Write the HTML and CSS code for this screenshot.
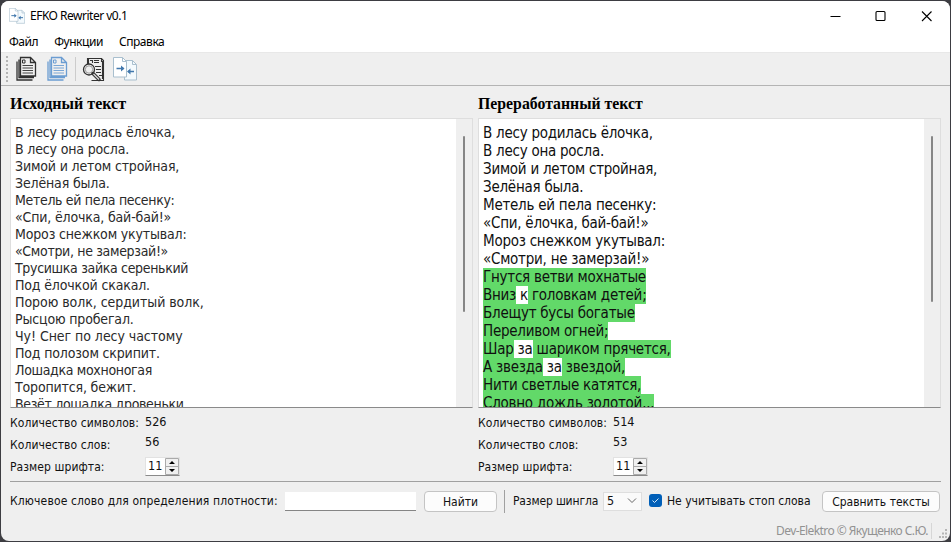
FILE: index.html
```html
<!DOCTYPE html>
<html lang="ru">
<head>
<meta charset="utf-8">
<title>EFKO Rewriter v0.1</title>
<link rel="stylesheet" href="styles.css">
</head>
<body>
<svg class="defs" width="0" height="0" aria-hidden="true">
  <symbol id="doc" viewBox="0 0 22 26">
    <path d="M5.500 1.500h10l5 5v13.500h-15z M15.500 1.500v5h5 M4 3.500v18h15 M2 5.500v18.500h15.500" fill="none" stroke="currentColor" stroke-width="1.300"/>
    <path d="M7.500 4h2.500v3h-2.500z" fill="none" stroke="currentColor"/>
    <path d="M7.500 9.500h10.500 M7.500 12h10.500 M7.500 14.500h10.500 M7.500 17h10.500" fill="none" stroke="currentColor" stroke-width=".900"/>
  </symbol>
  <symbol id="pair" viewBox="0 0 24 24">
    <path d="M11.500 3.500h8l4 4v15.500h-12z" fill="#f4fafd" stroke="#a9bfce"/>
    <path d="M19.500 3.500v4h4" fill="none" stroke="#a9bfce"/>
    <path d="M.500 .500h9l4 4v15.500h-13z" fill="#fff" stroke="#a9bfce"/>
    <path d="M9.500 .500v4h4" fill="none" stroke="#a9bfce"/>
    <path d="M3.500 11.500h7 M21 14.500h-6" stroke="#4278ad" stroke-width="1.500"/>
    <path d="M8 8.500l3.500 3l-3.500 3z M17.500 11.500l-3.500 3l3.500 3z" fill="#4278ad"/>
  </symbol>
</svg>
<div class="window">
  <header class="titlebar">
    <svg class="app-icon"><use href="#pair"/></svg>
    <span class="title">EFKO Rewriter v0.1</span>
    <svg class="controls" viewBox="0 0 104 12"><path d="M.500 6.500h10" /><rect x="46" y="1.500" width="9" height="9" rx="1"/><path d="M92 1.500l9.500 9.500M101.500 1.500l-9.500 9.500"/></svg>
  </header>
  <nav class="menubar"><span class="m1">Файл</span><span class="m2">Функции</span><span class="m3">Справка</span></nav>
  <div class="toolbar">
    <i class="grip"></i>
    <svg class="tool doc"><use href="#doc"/></svg>
    <svg class="tool doc blue"><use href="#doc"/></svg>
    <i class="sep"></i>
    <svg class="tool find" viewBox="0 0 24 25"><path d="M5.500 7V1.500h14l2 2v20h-12 M19.500 1.500v3h2 M6.500 7V2 M8 3.500h2.500v2.500 M12 3.500h5 M12 5.500h5 M13 9.500h6 M14 12.500h5 M14 15.500h5 M17 18.500h3 M20.500 5v17" fill="none" stroke="#333" stroke-width="1.100"/><circle cx="7" cy="12.500" r="5.500" fill="#efefef" stroke="#333" stroke-width="1.300"/><circle cx="7" cy="12.500" r="3.700" fill="none" stroke="#777" stroke-width=".7"/><path d="M11 16.500l6 6" stroke="#333" stroke-width="3.500" stroke-linecap="round"/><path d="M11.500 17l5.500 5.500" stroke="#ddd" stroke-width="1.200"/></svg>
    <svg class="tool pair"><use href="#pair"/></svg>
  </div>
  <main class="panes">
    <section class="pane">
      <h2 class="src">Исходный текст</h2>
      <div class="editor">
        <div class="text source">В лесу родилась ёлочка,
В лесу она росла.
Зимой и летом стройная,
Зелёная была.
<span class="tight">Метель ей пела песенку:</span>
«Спи, ёлочка, бай-бай!»
Мороз снежком укутывал:
<span class="tight">«Смотри, не замерзай!»</span>
<span class="tight">Трусишка зайка серенький</span>
Под ёлочкой скакал.
<span class="loose">Порою волк, сердитый волк,</span>
Рысцою пробегал.
<span class="loose">Чу! Снег по лесу частому</span>
Под полозом скрипит.
<span class="tight">Лошадка мохноногая</span>
Торопится, бежит.
<span class="tight">Везёт лошадка дровеньки,</span></div>
        <div class="scroll"><i class="thumb left"></i></div>
      </div>
      <dl class="stats">
        <dt>Количество символов:</dt><dd>526</dd>
        <dt>Количество слов:</dt><dd class="up">56</dd>
        <dt>Размер шрифта:</dt><dd><span class="spin"><b>11</b><svg viewBox="0 0 14 17"><path d="M.500 .500h13v16h-13z M.500 8.500h13" fill="#f0f0f0" stroke="#aaa"/><path d="M4 6l3-3l3 3z M4 11l3 3l3-3z" fill="#000"/></svg></span></dd>
      </dl>
    </section>
    <section class="pane">
      <h2 class="res">Переработанный текст</h2>
      <div class="editor">
        <div class="text result">В лесу родилась ёлочка,
В лесу она росла.
Зимой и летом стройная,
Зелёная была.
Метель ей пела песенку:
«Спи, ёлочка, бай-бай!»
Мороз снежком укутывал:
«Смотри, не замерзай!»
<mark>Гнутся ветви мохнатые</mark>
<mark>Вниз</mark> к<mark> головкам детей;</mark>
<mark>Блещут бусы богатые</mark>
<mark>Переливом огней;</mark>
<mark>Шар</mark> за<mark> шариком прячется,</mark>
<mark>А звезда</mark> за<mark> звездой,</mark>
<mark>Нити светлые катятся,</mark>
<mark>Словно дождь золотой...</mark></div>
        <div class="scroll"><i class="thumb right"></i></div>
      </div>
      <dl class="stats">
        <dt>Количество символов:</dt><dd>514</dd>
        <dt>Количество слов:</dt><dd class="up">53</dd>
        <dt>Размер шрифта:</dt><dd><span class="spin"><b>11</b><svg viewBox="0 0 14 17"><path d="M.500 .500h13v16h-13z M.500 8.500h13" fill="#f0f0f0" stroke="#aaa"/><path d="M4 6l3-3l3 3z M4 11l3 3l3-3z" fill="#000"/></svg></span></dd>
      </dl>
    </section>
  </main>
  <div class="actions">
    <span class="keyword">Ключевое слово для определения плотности:</span>
    <span class="field"></span>
    <span class="button find-btn">Найти</span>
    <i class="divider"></i>
    <span class="shingle">Размер шингла</span>
    <span class="combo">5<svg viewBox="0 0 10 6"><path d="M1 .500l4 4l4-4" fill="none" stroke="#666"/></svg></span>
    <svg class="check" viewBox="0 0 13 13"><rect width="13" height="13" rx="3" fill="#005fb8"/><path d="M3.500 6.500l2 2l4-4" fill="none" stroke="#d5e8f8"/></svg>
    <span class="stop">Не учитывать стоп слова</span>
    <span class="button compare">Сравнить тексты</span>
  </div>
  <footer class="status"><span>Dev-Elektro © Якущенко С.Ю.</span><svg viewBox="0 0 10 10"><path d="M7 1h2M4 4.500h2M7 4.500h2M1 8h2M4 8h2M7 8h2" stroke="#b5b5b5" stroke-width="2"/></svg></footer>
</div>
</body>
</html>
```
FILE: styles.css
```css
* { box-sizing: border-box; }
body { margin: 0; width: 951px; height: 542px; background: #3d3d42; overflow: hidden; padding: 1px; font: 12px/16px "DejaVu Sans Condensed", "Noto Sans", sans-serif; color: #111; }
.defs { position: absolute; }
svg { display: block; flex: none; }
i { display: block; flex: none; }
span { white-space: nowrap; }
.window { width: 949px; height: 540px; border-radius: 8px; overflow: hidden; background: #efefef; display: flex; flex-direction: column; }
.titlebar { height: 30px; background: #fff; display: flex; align-items: center; padding: 0 16px 0 8px; flex: none; font: 12px/16px "Noto Sans", sans-serif; color: #000; }
.app-icon { width: 16px; height: 16px; }
.title { margin-left: 5px; letter-spacing: -0.5px; }
.controls { width: 104px; height: 12px; margin-left: auto; fill: none; stroke: #000; stroke-width: 1.1; }
.menubar { height: 22px; flex: none; background: #fff; border-bottom: 1px solid #e8e8e8; display: flex; padding: 2px 8px; gap: 16px; font: 12px/18px "Noto Sans", sans-serif; letter-spacing: -0.45px; color: #000; }
.toolbar { height: 33px; flex: none; border-bottom: 1px solid #b4b4b4; display: flex; align-items: center; padding-left: 5px; }
.grip { width: 2px; height: 26px; background: repeating-linear-gradient(#b4b4b4 0 2px, transparent 2px 4px); }
.doc { width: 22px; height: 26px; margin-left: 7px; color: #303030; }
.doc.blue { margin-left: 9px; color: #6b9dd2; }
.sep { width: 1px; height: 24px; margin-left: 7px; background: #ccc; }
.find { width: 24px; height: 25px; margin-left: 6px; }
.pair { width: 24px; height: 24px; margin-left: 7px; }
.panes { display: grid; grid-template-columns: 463px 463px; column-gap: 5px; margin: 9px 9px 0; flex: none; }
h2 { margin: 0; height: 23px; font: bold 15px/18px "Liberation Serif", serif; font-size: 15.8px; color: #000; }
.src { font-size: 16px; }
.editor { height: 290px; border: 1px solid #dedede; border-bottom-color: #8a8a8a; background: #fff; display: flex; justify-content: space-between; overflow: hidden; }
.text { white-space: pre; padding: 5px 4px; }
.source { font-size: 14px; line-height: 17px; letter-spacing: -0.16px; color: #2a2a2a; }
.tight { letter-spacing: -0.33px; }
.loose { letter-spacing: -0.05px; }
.result { font-size: 15px; line-height: 18px; letter-spacing: -0.25px; color: #101010; }
mark { display: inline-block; height: 18px; background: #62d969; color: inherit; vertical-align: top; }
.scroll { width: 16px; background: #efefef; padding: 17px 0 0 7px; }
.thumb { width: 2px; background: #868686; border-radius: 1px; }
.thumb.left { height: 176px; }
.thumb.right { height: 166px; }
.stats { margin: 4px 0 0; display: grid; grid-template-columns: 135px 60px; grid-template-rows: 22px 22px 22px; align-items: center; }
dt, dd { margin: 0; white-space: nowrap; }
dt { letter-spacing: 0.08px; }
dd { font-size: 12.5px; padding-bottom: 2px; }
.up { padding-bottom: 6px; }
.spin { display: flex; align-items: center; width: 35px; height: 19px; background: #fff; border: 1px solid #e2e2e2; border-bottom-color: #8a8a8a; padding-left: 2px; }
.spin b { font-weight: normal; width: 17px; }
.spin svg { width: 14px; height: 17px; }
.actions { margin: 3px 9px 0; border-top: 1px solid #a0a0a0; height: 39px; flex: none; display: flex; align-items: center; }
.keyword { width: 275px; letter-spacing: 0.14px; }
.field { width: 131px; height: 19px; background: #fff; border-bottom: 1px solid #858585; }
.button { height: 21px; border: 1px solid #c4c4c4; border-radius: 4px; background: #fcfcfc; text-align: center; line-height: 20px; }
.find-btn { width: 73px; margin-left: 8px; }
.divider { width: 1px; height: 23px; background: #a0a0a0; margin-left: 7px; }
.shingle { width: 90px; margin-left: 8px; letter-spacing: -0.15px; }
.combo { width: 39px; height: 19px; border: 1px solid #dedede; background: #fafafa; display: flex; align-items: center; justify-content: space-between; padding: 0 4px 0 3px; font-size: 12.5px; }
.combo svg { width: 10px; height: 6px; }
.check { width: 13px; height: 13px; margin-left: 7px; margin-bottom: 2px; }
.stop { margin-left: 5px; width: 147px; }
.compare { width: 118px; margin-left: 8px; }
.status { height: 22px; margin-top: auto; display: flex; justify-content: flex-end; align-items: center; color: #929292; padding-right: 2px; letter-spacing: -0.58px; font-family: "Noto Sans", sans-serif; }
.status span { border-right: 1px solid #d6d6d6; padding-right: 3px; }
.status svg { width: 10px; height: 10px; margin-left: 6px; align-self: flex-end; margin-bottom: 2px; }
```
